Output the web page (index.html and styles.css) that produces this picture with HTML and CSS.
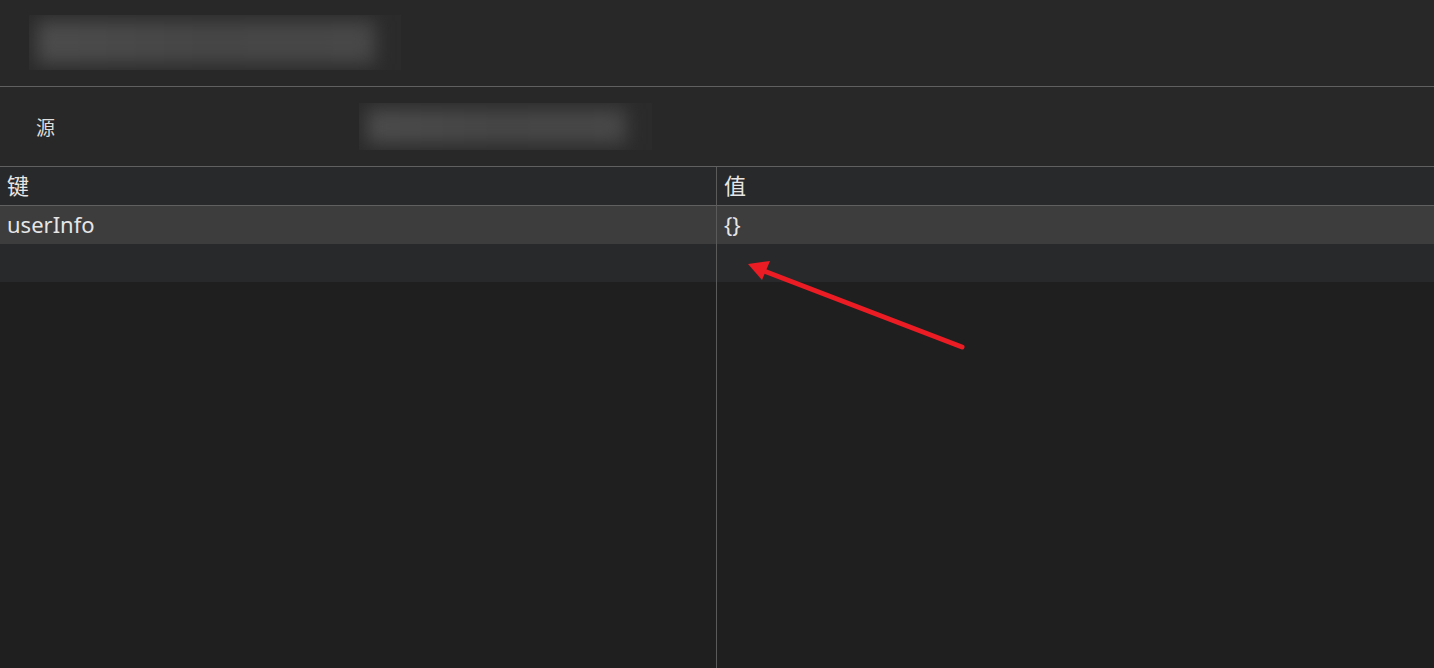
FILE: index.html
```html
<!DOCTYPE html>
<html lang="zh-CN">
<head>
    <meta charset="UTF-8">
    <meta name="viewport" content="width=device-width, initial-scale=1.0">
    <title>存储</title>
    <link rel="stylesheet" href="styles.css">
</head>
<body>
    <div class="page">
        <div class="top-bar">
            <div class="blur-box wide"><div class="blur-fill"></div></div>
        </div>

        <div class="source-row">
            <span class="source-label">源</span>
            <div class="blur-box narrow"><div class="blur-fill"></div></div>
        </div>

        <div class="storage-table">
            <div class="cell head key">键</div>
            <div class="cell head">值</div>

            <div class="cell selected key">userInfo</div>
            <div class="cell selected">{}</div>

            <div class="cell empty key"></div>
            <div class="cell empty"></div>

            <div class="cell filler key"></div>
            <div class="cell filler"></div>
        </div>

        <svg class="arrow" width="1434" height="668" viewBox="0 0 1434 668">
            <line x1="962" y1="347" x2="764" y2="271" stroke="#ec1c24" stroke-width="5" stroke-linecap="round"/>
            <polygon points="748,264 770,261 762,280" fill="#ec1c24"/>
        </svg>
    </div>
</body>
</html>
```

FILE: styles.css
```css
* { margin: 0; padding: 0; box-sizing: border-box; }
body {
    font-family: 'Noto Sans', 'Noto Sans CJK SC', sans-serif;
    background: #1f1f1f;
    color: #e6e6e6;
    height: 100vh;
    overflow: hidden;
}
.page {
    position: relative;
    height: 100vh;
    display: flex;
    flex-direction: column;
}
.top-bar {
    height: 87px;
    background: #282828;
    border-bottom: 1px solid #606060;
    padding: 15px 0 0 29px;
}
.blur-box {
    background: #2b2b2b;
    overflow: hidden;
    position: relative;
}
.blur-box.wide { width: 372px; height: 55px; }
.blur-box.narrow { width: 293px; height: 47px; }
.blur-fill {
    position: absolute;
    top: 6px;
    bottom: 6px;
    left: 8px;
    right: 26px;
    background: linear-gradient(90deg, #4b4c4b, #464646 50%, #484848);
    filter: blur(9px);
}
.source-row {
    height: 80px;
    background: #282828;
    border-bottom: 1px solid #606060;
    display: flex;
    align-items: flex-start;
    padding-top: 16px;
}
.source-label {
    font-size: 19px;
    width: 359px;
    padding-left: 36px;
    padding-top: 10px;
    color: #dcdcdc;
}
.storage-table {
    flex: 1;
    display: grid;
    grid-template-columns: 717px 1fr;
    grid-template-rows: 39px 38px 38px 1fr;
}
.cell {
    font-size: 22px;
    line-height: 36px;
    padding-left: 7px;
    white-space: nowrap;
}
.cell.key { border-right: 1px solid #5a5a5a; }
.cell.head {
    background: #28292b;
    border-bottom: 1px solid #606060;
}
.cell.selected { background: #3d3d3d; }
.cell.empty { background: #28292b; }
.cell.filler { background: #1f1f1f; }
.arrow {
    position: absolute;
    top: 0;
    left: 0;
    pointer-events: none;
}
```
